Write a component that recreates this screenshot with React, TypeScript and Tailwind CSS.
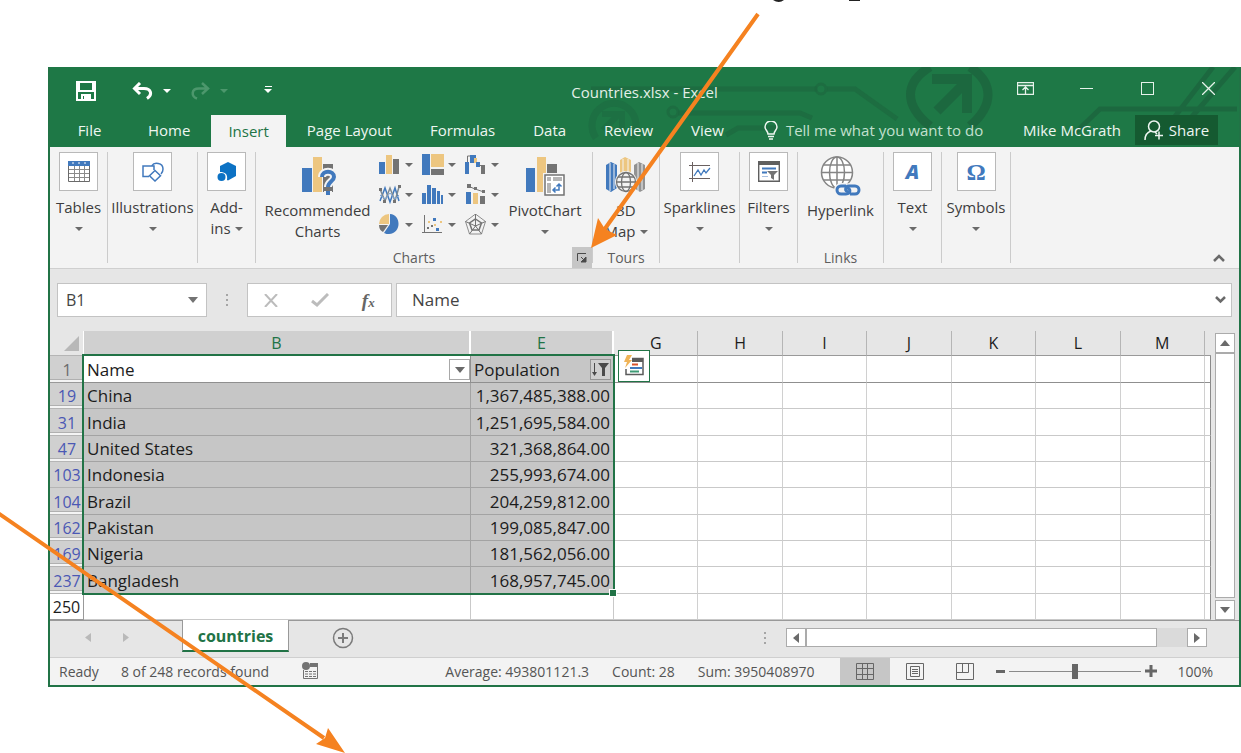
import React from 'react';
import clsx from 'clsx';

const ROWS = [
  { num: 19, name: 'China', population: '1,367,485,388.00', gap: true },
  { num: 31, name: 'India', population: '1,251,695,584.00', gap: true },
  { num: 47, name: 'United States', population: '321,368,864.00', gap: true },
  { num: 103, name: 'Indonesia', population: '255,993,674.00', gap: false },
  { num: 104, name: 'Brazil', population: '204,259,812.00', gap: true },
  { num: 162, name: 'Pakistan', population: '199,085,847.00', gap: true },
  { num: 169, name: 'Nigeria', population: '181,562,056.00', gap: true },
  { num: 237, name: 'Bangladesh', population: '168,957,745.00', gap: true },
];

const EMPTY_COLS = ['G', 'H', 'I', 'J', 'K', 'L', 'M'];
const TABS = ['Home', 'Insert', 'Page Layout', 'Formulas', 'Data', 'Review', 'View'];

const BLUE = '#4179bd';
const SAND = '#edc680';
const GRAY = '#737373';

function Caret({ className = 'text-[#6a6a6a]' }: { className?: string }) {
  return (
    <svg width="8" height="4" viewBox="0 0 8 4" className={clsx('shrink-0', className)} fill="currentColor">
      <path d="M0 0h8L4 4z" />
    </svg>
  );
}

/* Ribbon icons */

function TablesIcon() {
  return (
    <svg width="22" height="21" viewBox="0 0 22 21">
      <path d="M.5.5h21v20H.5z" fill="#fff" stroke="#6a6a6a" />
      <path d="M0 0h22v5H0z" fill={BLUE} />
      <path d="M4 2h2M10 2h2M16 2h2" stroke="#fff" />
      <path d="M1 8.5h20M1 12.5h20M1 16.5h20M6.5 5v15M11.5 5v15M16.5 5v15" stroke="#8a8a8a" />
    </svg>
  );
}

function ShapesIcon() {
  return (
    <svg width="22" height="20" viewBox="0 0 22 20" fill="none" stroke={BLUE} strokeWidth="1.5">
      <path d="M7 14.500H1V4h11v4M10 3.500C12 0 21 .5 21 7c0 2-1 4-2 5" />
      <path d="M13 8.500l5.500 5.200L13 19l-5.500-5.300z" fill="#fff" />
    </svg>
  );
}

function AddinsIcon() {
  return (
    <svg width="20" height="20" viewBox="0 0 20 20" fill="#0c72c4">
      <path d="M11 0l8 4v10l-8 4.500-1-.5c1-6-2-8-7-8V4z" />
      <circle cx="4.500" cy="15" r="4" />
    </svg>
  );
}

function RecommendedIcon() {
  return (
    <svg width="38" height="40" viewBox="0 0 38 40">
      <path d="M3 12h10v24H3z" fill={BLUE} />
      <path d="M14 1h9v35h-9z" fill={SAND} />
      <path d="M24 8h10v28H24z" fill={GRAY} />
      <path d="M23 21c0-7 12-7 12 0 0 4-6 5-6 10M29 35v4" fill="none" stroke="#f3f3f3" strokeWidth="8" />
      <path d="M23 21c0-7 12-7 12 0 0 4-6 5-6 10M29 35v4" fill="none" stroke={BLUE} strokeWidth="4" />
    </svg>
  );
}

function PivotChartIcon() {
  return (
    <svg width="42" height="40" viewBox="0 0 42 40">
      <path d="M2 12h9v24H2z" fill={BLUE} />
      <path d="M13 1h9v35h-9z" fill={SAND} />
      <path d="M23 8h10v12H23z" fill={GRAY} />
      <path d="M19 17h22v22H19z" fill="#f3f3f3" />
      <path d="M21 19h19v20H21z" fill="#fff" stroke={GRAY} strokeWidth="1.500" />
      <path d="M23 21h4v4h-4zM29 21h9v4h-9zM23 27h4v10h-4z" fill="#b5b5b5" />
      <path d="M29 34h6v-6M31.500 31.500L29 34l2.500 2.500M32.500 30.500L35 28l2.500 2.500" fill="none" stroke={BLUE} strokeWidth="1.500" />
    </svg>
  );
}

function MapIcon() {
  return (
    <svg width="40" height="40" viewBox="0 0 40 40">
      <path d="M0 9l5-3 6 3v23l-6 4-5-3z" fill={BLUE} />
      <path d="M14 4l5-3 6 3v28H14z" fill={SAND} />
      <path d="M28 9l5-3 6 3v24l-5 3-6-4z" fill="#929292" />
      <path d="M4 7v28M8 8v25M17 3v16M22 3v16M32 7v28M36 8v26" stroke="#f3f3f3" />
      <circle cx="20" cy="26" r="11" fill="#f3f3f3" />
      <g fill="none" stroke={GRAY} strokeWidth="1.300">
        <circle cx="20" cy="26" r="9.500" />
        <ellipse cx="20" cy="26" rx="4.500" ry="9.500" />
        <path d="M10.500 26h19M12 21h16M12 31h16" />
      </g>
    </svg>
  );
}

function SparklinesIcon() {
  return (
    <svg width="22" height="20" viewBox="0 0 22 20" fill="none">
      <path d="M0 3.500h21M3.500 0v20M0 16.500h21" stroke="#6a6060" />
      <path d="M5 14l4-6 3 5 3-5 2 3 4-5" stroke={BLUE} strokeWidth="1.300" />
    </svg>
  );
}

function FiltersIcon() {
  return (
    <svg width="22" height="21" viewBox="0 0 22 21">
      <path d="M.7.7h20.600v19.600H.7z" fill="#fff" stroke="#5f5f5f" strokeWidth="1.400" />
      <path d="M0 0h22v4H0z" fill="#5f5f5f" />
      <path d="M4 7.500h14M4 11.500h5" stroke={BLUE} strokeWidth="2" />
      <path d="M4 15.500h6" stroke="#a9c0e0" />
      <path d="M9 10h11l-4 4v5l-3-2v-3z" fill={GRAY} />
    </svg>
  );
}

function HyperlinkIcon() {
  return (
    <svg width="42" height="40" viewBox="0 0 42 40" fill="none">
      <g stroke="#858585" strokeWidth="1.500">
        <circle cx="17" cy="16.500" r="15.500" fill="#fff" />
        <ellipse cx="17" cy="16.500" rx="7.500" ry="15.500" />
        <path d="M17 1v31M1.500 16.500h31M4 9h26M4 24h26" />
      </g>
      <g stroke="#f3f3f3" strokeWidth="6">
        <rect x="17" y="30" width="13" height="8" rx="4" />
        <rect x="27" y="30" width="13" height="8" rx="4" />
      </g>
      <g stroke={BLUE} strokeWidth="3">
        <path d="M26 30h-5a4 4 0 000 8h5c5 0 5-6 1-6" />
        <path d="M30 38h5a4 4 0 000-8h-6c-4 0-5 6 0 6" />
      </g>
    </svg>
  );
}

/* Small chart gallery, three rows of three */
const CHART_ICONS: { label: string; art: React.ReactNode }[] = [
  {
    label: 'Column chart',
    art: (
      <>
        <path d="M0 8h6v12H0z" fill={BLUE} />
        <path d="M7 1h6v19H7z" fill={SAND} />
        <path d="M14 5h6v15h-6z" fill={GRAY} />
      </>
    ),
  },
  {
    label: 'Hierarchy chart',
    art: (
      <>
        <path d="M0 0h8v21H0z" fill={BLUE} />
        <path d="M9 0h13v13H9z" fill={SAND} />
        <path d="M9 15h13v6H9z" fill={GRAY} />
      </>
    ),
  },
  {
    label: 'Waterfall chart',
    art: (
      <>
        <path d="M0 8h4v12H0zM5 1h4v8H5z" fill={BLUE} />
        <path d="M5 1h6v3H5z" fill={BLUE} />
        <path d="M9 4h3v5H9z" fill={SAND} />
        <path d="M11 8h4v5h-4z" fill={BLUE} />
        <path d="M16 11h4v9h-4z" fill={GRAY} />
        <path d="M2.500 8V2H5M14 11.500h4" stroke={GRAY} fill="none" />
      </>
    ),
  },
  {
    label: 'Line chart',
    art: (
      <>
        <g fill="none" strokeWidth="1.500">
          <path d="M1 17l5-13 5 14 5-14 4 13" stroke={BLUE} />
          <path d="M1 5l5 12 5-13 5 13 4-14" stroke="#7c8a93" />
          <path d="M1 11l5 4 5-6 5 6 4-4" stroke="#7fa6d6" strokeWidth="1" />
        </g>
        <path d="M0 4h3v3H0zM19 1h3v3h-3zM4 16h3v3H4zM14 16h3v3h-3z" fill={GRAY} />
      </>
    ),
  },
  {
    label: 'Histogram',
    art: <path d="M0 9h4v11H0zM5 1h4v19H5zM10 4h4v16h-4zM15 7h3v13h-3zM19 11h2v9h-2z" fill={BLUE} />,
  },
  {
    label: 'Combo chart',
    art: (
      <>
        <path d="M1 8h5v12H1z" fill={BLUE} />
        <path d="M8 9h5v11H8z" fill={SAND} />
        <path d="M15 12h5v8h-5z" fill={GRAY} />
        <path d="M3 2l7 3 9 3" stroke={GRAY} fill="none" />
        <path d="M2 0h4v4H2zM9 3h3v3H9zM17 6h3v3h-3z" fill={GRAY} />
      </>
    ),
  },
  {
    label: 'Pie chart',
    art: (
      <>
        <path d="M10 10V0A10 10 0 000 10z" fill={SAND} />
        <path d="M9 11H0c0 4 2 6 4 7z" fill={GRAY} />
        <path d="M11 10V0c12 1 11 20-1 20-2 0-3 0-5-1z" fill={BLUE} />
      </>
    ),
  },
  {
    label: 'Scatter chart',
    art: (
      <>
        <path d="M2.500 1v18M0 18.500h20" stroke={GRAY} fill="none" />
        <path d="M11 4h3v3h-3zM14 14h3v3h-3z" fill={BLUE} />
        <path d="M6 7h2v2H6zM12 10h2v2h-2zM18 7h2v2h-2z" fill={SAND} />
        <path d="M5 13h2v2H5zM9 11h2v2H9z" fill={GRAY} />
      </>
    ),
  },
  {
    label: 'Radar chart',
    art: (
      <g fill="none" stroke={GRAY}>
        <path d="M10.500 0l10 7.500-4 12.500h-12L.5 7.500z" strokeWidth=".8" />
        <path d="M10.500 5l6 4-2.500 7H7L4.500 9z" strokeWidth="1.500" />
        <path d="M10.500 0v12M.5 7.500l10 4.500 10-4.500M4.500 20l6-8 6 8" />
      </g>
    ),
  },
];

function ChartGallery() {
  return (
    <div className="grid grid-cols-3 content-start gap-x-[9px] gap-y-[9px] pt-[7px]">
      {CHART_ICONS.map(({ label, art }) => (
        <button key={label} aria-label={label} className="flex items-center gap-1">
          <svg width="22" height="21" viewBox="0 0 22 21">{art}</svg>
          <Caret />
        </button>
      ))}
    </div>
  );
}

function Divider() {
  return <div className="my-[5px] w-px shrink-0 bg-[#cbcbcb]" />;
}

function BoxedGroup({ label, width, children }: { label: string; width: string; children: React.ReactNode }) {
  return (
    <button className={clsx('flex shrink-0 flex-col items-center pt-[5px]', width)}>
      <span className="mb-[6px] flex h-[39px] w-[39px] items-center justify-center border border-[#b9b9b9] bg-white">{children}</span>
      <span className="leading-[21px]">{label}</span>
      <span className="flex h-[21px] items-center"><Caret /></span>
    </button>
  );
}

function Ribbon() {
  return (
    <div className="flex h-[121px] whitespace-nowrap bg-[#f3f3f3] text-[15px] text-[#3d3d3d]">
      <BoxedGroup label="Tables" width="w-[57px]"><TablesIcon /></BoxedGroup>
      <Divider />
      <BoxedGroup label="Illustrations" width="w-[89px]"><ShapesIcon /></BoxedGroup>
      <Divider />
      <button className="flex w-[57px] shrink-0 flex-col items-center pt-[5px] leading-[21px]">
        <span className="mb-[6px] flex h-[39px] w-[39px] items-center justify-center border border-[#b9b9b9] bg-white"><AddinsIcon /></span>
        <span>Add-</span>
        <span className="flex items-center gap-1">ins <Caret /></span>
      </button>
      <Divider />

      <div className="flex w-[336px] shrink-0 flex-col">
        <div className="flex h-[100px] pl-2">
          <button className="mr-2 flex w-[107px] flex-col items-center pt-[9px] leading-[21px]">
            <span className="mb-1"><RecommendedIcon /></span>
            <span>Recommended</span>
            <span>Charts</span>
          </button>
          <ChartGallery />
          <button className="ml-2 flex w-[76px] flex-col items-center pt-[9px] leading-[21px]">
            <span className="mb-1"><PivotChartIcon /></span>
            <span>PivotChart</span>
            <span className="flex h-[21px] items-center"><Caret /></span>
          </button>
        </div>
        <div className="flex h-[21px] items-center">
          <span className="flex-1 text-center text-[14px] text-[#5e5e5e]">Charts</span>
          <button aria-label="Charts dialog launcher" className="flex h-[21px] w-5 items-center justify-center bg-[#c6c6c6]">
            <svg width="10" height="10" viewBox="0 0 10 10" fill="none" stroke="#4a4a4a">
              <path d="M.5 8V.5H9M4 4l4 4" />
              <path d="M9 4v5H4z" fill="#4a4a4a" />
            </svg>
          </button>
        </div>
      </div>
      <Divider />

      <div className="flex w-[66px] shrink-0 flex-col items-center">
        <button className="flex h-[100px] flex-col items-center pt-[9px] leading-[21px]">
          <span className="mb-1"><MapIcon /></span>
          <span>3D</span>
          <span className="flex items-center gap-1">Map <Caret /></span>
        </button>
        <span className="text-[14px] leading-[21px] text-[#5e5e5e]">Tours</span>
      </div>
      <Divider />
      <BoxedGroup label="Sparklines" width="w-[79px]"><SparklinesIcon /></BoxedGroup>
      <Divider />
      <BoxedGroup label="Filters" width="w-[57px]"><FiltersIcon /></BoxedGroup>
      <Divider />
      <div className="flex w-[85px] shrink-0 flex-col items-center">
        <button className="flex h-[100px] flex-col items-center pt-[9px] leading-[21px]">
          <span className="mb-1"><HyperlinkIcon /></span>
          <span>Hyperlink</span>
        </button>
        <span className="text-[14px] leading-[21px] text-[#5e5e5e]">Links</span>
      </div>
      <Divider />
      <BoxedGroup label="Text" width="w-[57px]">
        <span className="text-[20px] font-extrabold italic leading-none text-[#4179bd]">A</span>
      </BoxedGroup>
      <Divider />
      <BoxedGroup label="Symbols" width="w-[68px]">
        <span className="font-['Liberation_Serif',serif] text-[24px] font-bold leading-none text-[#4179bd]">Ω</span>
      </BoxedGroup>
      <Divider />
      <button aria-label="Collapse the ribbon" className="mb-[6px] ml-auto mr-[14px] self-end">
        <svg width="12" height="8" viewBox="0 0 12 8" fill="none" stroke="#6a6a6a" strokeWidth="2.500"><path d="M1 7l5-5 5 5" /></svg>
      </button>
    </div>
  );
}

/* Circuit pattern behind the title bar */
function Circuit() {
  return (
    <svg className="pointer-events-none absolute right-0 top-0" width="681" height="80" viewBox="560 67 681 80" fill="none" stroke="#1c683f" strokeWidth="4">
      <path d="M593 89h226M829 89h28l42 30M680 113h122l12 5M728 135l12-7h40" strokeWidth="5" opacity=".7" />
      <circle cx="823" cy="89" r="5" strokeWidth="3" opacity=".7" />
      <circle cx="675" cy="112" r="5" strokeWidth="3" opacity=".7" />
      <path d="M598 138a22 22 0 1136 0" strokeWidth="7" opacity=".5" />
      <path d="M605 130l16-16M604 114h20v18" strokeWidth="6" opacity=".5" />
      <path d="M932 67c-26 16-26 38 0 59M972 67c24 16 24 38 0 59" strokeWidth="9" />
      <path d="M939 111l28-28M934 79h35v34" strokeWidth="10" />
      <path d="M1076 134l26-25h137M1175 119l40-52M1192 119l45-52" strokeWidth="5" />
    </svg>
  );
}

function TitleBar() {
  return (
    <header className="relative whitespace-nowrap bg-[#1e7846] text-[15px] text-white">
      <Circuit />
      <div className="relative grid h-[47px] grid-cols-[1fr_auto_1fr] items-center">
        <div className="flex items-center pl-[26px]">
          <button aria-label="Save">
            <svg width="20" height="20" viewBox="0 0 20 20" fill="currentColor">
              <path fillRule="evenodd" d="M0 0h20v20H0zM4 2v7h12V2zM2 11v7h3v-5h10v5h3v-7zM7 15v3h1v-3z" />
            </svg>
          </button>
          <button aria-label="Undo" className="ml-9 flex items-center gap-[9px]">
            <svg width="22" height="18" viewBox="0 0 22 18" fill="none" stroke="currentColor" strokeWidth="3">
              <path d="M8 1L2.500 6.500 8 12M3 6.500h9c7 0 9 6 3 10" />
            </svg>
            <Caret className="text-white" />
          </button>
          <button aria-label="Redo" className="ml-[18px] flex items-center gap-[9px] text-[#4c976c]">
            <svg width="22" height="18" viewBox="0 0 22 18" fill="none" stroke="currentColor" strokeWidth="2.500">
              <path d="M13 1l6 5.500-6 5.500M19 6.500h-9c-8 0-8 8-2 10" />
            </svg>
            <Caret className="text-[#4c976c]" />
          </button>
          <button aria-label="Customize Quick Access Toolbar" className="ml-9 flex -translate-y-px flex-col items-center gap-[2px]">
            <span className="h-px w-[7px] bg-white" />
            <Caret className="text-white" />
          </button>
        </div>
        <h1 className="pt-1 text-[15px] text-[#e4efe8]">Countries.xlsx - Excel</h1>
        <div className="flex justify-end pb-1 text-[#e6f2ea]">
          <button aria-label="Ribbon display options" className="flex w-[61px] items-center justify-center">
            <svg width="17" height="13" viewBox="0 0 17 13" fill="none" stroke="currentColor">
              <path d="M.5.5h16v12H.5zM1 3.500h15M8.500 12V5M5.500 8l3-3 3 3" strokeWidth="1.300" />
            </svg>
          </button>
          <button aria-label="Minimize" className="flex w-[61px] items-center justify-center"><span className="h-px w-[13px] bg-[#e6f2ea]" /></button>
          <button aria-label="Maximize" className="flex w-[61px] items-center justify-center"><span className="h-[13px] w-[13px] border border-[#e6f2ea]" /></button>
          <button aria-label="Close" className="flex w-[61px] items-center justify-center">
            <svg width="13" height="13" viewBox="0 0 13 13" fill="none" stroke="currentColor" strokeWidth="1.300"><path d="M0 0l13 13M13 0L0 13" /></svg>
          </button>
        </div>
      </div>

      <nav className="relative flex h-[33px] items-stretch text-[#eef6f1]">
        <button className="w-[79px]">File</button>
        {TABS.map((tab) => (
          <button key={tab} className={clsx('mx-[2px] px-[17px]', tab === 'Insert' && 'mt-px bg-[#f3f3f3] text-[#217346]')}>
            {tab}
          </button>
        ))}
        <button className="ml-[21px] flex items-center gap-2 text-[#c3e0cf]">
          <svg width="14" height="19" viewBox="0 0 14 19" fill="none" stroke="#eef6f1" strokeWidth="1.500">
            <path d="M4 13c0-3-3-4-3-7a6 6 0 0112 0c0 3-3 4-3 7zM4 15.500h6M5 18h4" />
          </svg>
          Tell me what you want to do
        </button>
        <button className="ml-auto">Mike McGrath</button>
        <button className="mb-[2px] ml-[14px] mr-[21px] mt-px flex w-[83px] items-center justify-center gap-[5px] bg-[#155a31]">
          <svg width="20" height="21" viewBox="0 0 20 21" fill="none" stroke="currentColor" strokeWidth="1.500">
            <circle cx="10" cy="6.500" r="5.500" />
            <path d="M1 20c0-5 3-8 6-9M11 12l2 2M15 11.500v8M11 15.500h8" />
          </svg>
          Share
        </button>
      </nav>
    </header>
  );
}

function FormulaBar() {
  return (
    <div className="flex items-center border-t border-[#cfcfcf] px-[7px] py-[14px] text-[#444]">
      <div className="flex h-[34px] w-[150px] items-center border border-[#c3c3c3] bg-white pr-2">
        <input aria-label="Name box" defaultValue="B1" className="w-full min-w-0 pl-2 text-[16px] outline-none" />
        <button aria-label="Open name list"><svg width="10" height="6" viewBox="0 0 10 6" fill="#737373"><path d="M0 0h10L5 6z" /></svg></button>
      </div>
      <div className="flex w-10 flex-col items-center gap-[3px]">
        <span className="h-[2px] w-[2px] bg-[#a5a5a5]" />
        <span className="h-[2px] w-[2px] bg-[#a5a5a5]" />
        <span className="h-[2px] w-[2px] bg-[#a5a5a5]" />
      </div>
      <div className="flex h-[34px] w-[145px] items-center justify-around border border-[#c3c3c3] bg-white">
        <button aria-label="Cancel">
          <svg width="14" height="13" viewBox="0 0 14 13" fill="none" stroke="#bcbcbc" strokeWidth="2"><path d="M1 0l12 13M13 0L1 13" /></svg>
        </button>
        <button aria-label="Enter">
          <svg width="18" height="14" viewBox="0 0 18 14" fill="none" stroke="#bcbcbc" strokeWidth="3"><path d="M1 8l5 4L17 1" /></svg>
        </button>
        <button aria-label="Insert function" className="font-['Liberation_Serif',serif] text-[19px] font-bold italic leading-none text-[#666]">
          f<span className="text-[13px]">x</span>
        </button>
      </div>
      <div className="ml-1 flex h-[34px] flex-1 items-center border border-[#c3c3c3] bg-white pr-[5px]">
        <input aria-label="Formula" defaultValue="Name" className="w-full min-w-0 pl-[15px] text-[17px] outline-none" />
        <button aria-label="Expand formula bar">
          <svg width="11" height="8" viewBox="0 0 11 8" fill="none" stroke="#6a6a6a" strokeWidth="2.500"><path d="M1 1l4.500 4.500L10 1" /></svg>
        </button>
      </div>
    </div>
  );
}

const cell = 'border-b border-r border-[#c9c9c9]';
const selected = 'border-b border-r border-[#a3a3a3] bg-[#c6c6c6]';
const hiddenBelow = 'shadow-[inset_0_-2px_0_#f4f4f4,inset_0_-3px_0_#b0b0b0]';

function EmptyCells({ line = 'border-b-[#c9c9c9]' }: { line?: string }) {
  return (
    <>
      {EMPTY_COLS.map((c) => <td key={c} className={clsx('border-b border-r border-r-[#d0d0d0]', line)} />)}
      <td className={clsx('border-b border-r border-r-[#8a8a8a]', line)} />
    </>
  );
}

function Sheet() {
  return (
    <div className="flex">
      <div className="relative min-w-0 flex-1">
        <table className="w-full table-fixed border-separate border-spacing-0 bg-white text-[17px] leading-[24px] text-[#1c1c1c]">
          <colgroup>
            <col className="w-[34px]" />
            <col className="w-[387px]" />
            <col className="w-[143px]" />
            {EMPTY_COLS.map((c) => <col key={c} />)}
            <col className="w-[6px]" />
          </colgroup>
          <thead>
            <tr className="h-[25px] bg-[#e6e6e6]">
              <th className="border-b border-r border-[#b5b5b5] border-r-white p-0">
                <svg width="15" height="15" viewBox="0 0 15 15" fill="#b8b8b8" className="ml-[14px]"><path d="M15 0v15H0z" /></svg>
              </th>
              <th className="border-b border-r-2 border-[#999] border-r-white bg-[#d0d0d0] p-0 text-[16px] font-normal text-[#217346]">B</th>
              <th className="border-b border-r-2 border-[#999] border-r-white bg-[#d0d0d0] p-0 text-[16px] font-normal text-[#217346]">E</th>
              {EMPTY_COLS.map((c) => (
                <th key={c} className="border-b border-r border-[#999] border-r-[#b5b5b5] p-0 text-[16px] font-normal">{c}</th>
              ))}
              <th className="border-b border-[#999] p-0" />
            </tr>
          </thead>
          <tbody>
            <tr className="h-[27px]">
              <th className={clsx('border-b border-[#999] bg-[#d0d0d0] p-0 pt-px text-[16px] font-normal text-[#6b6b6b]', hiddenBelow)}>1</th>
              <td className="border-b border-r border-[#8f8f8f] p-0 pl-[3px] pt-px">
                <div className="flex items-center justify-between">
                  <span>Name</span>
                  <button aria-label="Filter Name" className="flex h-[21px] w-[21px] items-center justify-center border border-[#a8a8a8] bg-white"><svg width="10" height="6" viewBox="0 0 10 6" fill="#6a6a6a"><path d="M0 0h10L5 6z" /></svg></button>
                </div>
              </td>
              <td className="border-b border-r border-[#8f8f8f] bg-[#c6c6c6] p-0 pl-[3px] pt-px">
                <div className="flex items-center justify-between pr-[2px]">
                  <span>Population</span>
                  <button aria-label="Filter Population" className="flex h-[21px] w-[21px] items-center justify-center border border-[#959595] bg-[#cfcfcf]">
                    <svg width="17" height="13" viewBox="0 0 17 13" fill="#4a4a4a">
                      <path d="M2 0h1v9h2l-2.500 4L0 9h2zM6 0h11l-4 5v8h-3V5z" />
                    </svg>
                  </button>
                </div>
              </td>
              <EmptyCells line="border-b-[#8f8f8f]" />
            </tr>
            {ROWS.map((row, i) => (
              <tr key={row.num} className={i % 3 === 1 ? 'h-[27px]' : 'h-[26px]'}>
                <th className={clsx('border-b border-[#b5b5b5] bg-[#d0d0d0] p-0 pt-px text-[16px] font-normal text-[#4b58b4]', row.gap && hiddenBelow)}>{row.num}</th>
                <td className={clsx(selected, 'p-0 pl-[3px] pt-px')}>{row.name}</td>
                <td className={clsx(selected, 'p-0 pr-[3px] pt-px text-right')}>{row.population}</td>
                <EmptyCells />
              </tr>
            ))}
            <tr className="h-[26px]">
              <th className="border-b border-r border-[#999] p-0 pt-px text-[16px] font-normal">250</th>
              <td className={cell} />
              <td className={cell} />
              <EmptyCells />
            </tr>
          </tbody>
        </table>

        {/* selection outline with fill handle */}
        <div className="pointer-events-none absolute left-[32px] top-[23px] h-[241px] w-[533px] border-2 border-[#217346]">
          <span className="absolute -bottom-1 -right-1 h-[8px] w-[8px] border border-white bg-[#217346]" />
        </div>
        <button aria-label="Quick analysis" className="absolute left-[568px] top-[19px] flex h-8 w-8 items-center justify-center border border-[#217346] bg-white">
          <svg width="22" height="22" viewBox="0 0 22 22" fill="none">
            <path d="M9 3.500h11v16H3V14" stroke="#5b5b5b" strokeWidth="1.500" />
            <path d="M9 3h11v4H9z" fill="#5b5b5b" />
            <path d="M4 0h5L6 5h3l-7 8 2-6H1z" fill="#f0b458" />
            <path d="M9 9.500h6" stroke="#d9532c" strokeWidth="2" />
            <path d="M7 13h12" stroke={BLUE} strokeWidth="2" />
            <path d="M7 16.500h9" stroke="#3d9a75" strokeWidth="2" />
          </svg>
        </button>
      </div>

      <div className="flex w-[28px] shrink-0 flex-col px-1 pt-[2px]">
        <button aria-label="Scroll up" className="flex h-5 items-center justify-center border border-[#ababab] bg-white">
          <svg width="10" height="6" viewBox="0 0 10 6" fill="#6a6a6a"><path d="M0 6h10L5 0z" /></svg>
        </button>
        <div className="mb-[2px] flex-1 border border-[#ababab] bg-white" />
        <button aria-label="Scroll down" className="flex h-5 items-center justify-center border border-[#ababab] bg-white">
          <svg width="10" height="6" viewBox="0 0 10 6" fill="#6a6a6a"><path d="M0 0h10L5 6z" /></svg>
        </button>
      </div>
    </div>
  );
}

function SheetTabs() {
  return (
    <div className="flex h-[37px]">
      <div className="flex w-[132px] items-center border-t border-[#999] pb-[3px] pl-[35px]">
        <button aria-label="Previous sheet"><svg width="6" height="9" viewBox="0 0 6 9" fill="#b9b9b9"><path d="M6 0v9L0 4.500z" /></svg></button>
        <button aria-label="Next sheet" className="ml-8"><svg width="6" height="9" viewBox="0 0 6 9" fill="#b9b9b9"><path d="M0 0v9l6-4.500z" /></svg></button>
      </div>
      <button className="h-[32px] w-[107px] border-x border-b-2 border-x-[#999] border-b-[#217346] bg-white pt-[2px] text-[16px] font-bold text-[#217346]">countries</button>
      <div className="flex flex-1 items-center border-t border-[#999] pb-[3px] pl-[43px]">
        <button aria-label="New sheet">
          <svg width="22" height="22" viewBox="0 0 22 22" fill="none" stroke="#7a7a7a">
            <circle cx="11" cy="11" r="9.500" strokeWidth="1.500" />
            <path d="M6 11h10M11 6v10" strokeWidth="2" />
          </svg>
        </button>
        <div className="ml-auto mr-5 flex flex-col gap-[3px]">
          <span className="h-[2px] w-[2px] bg-[#a5a5a5]" />
          <span className="h-[2px] w-[2px] bg-[#a5a5a5]" />
          <span className="h-[2px] w-[2px] bg-[#a5a5a5]" />
        </div>
        <div className="flex h-[19px] w-[421px] bg-[#dadada]">
          <button aria-label="Scroll left" className="flex w-5 items-center justify-center border border-[#ababab] bg-white"><svg width="6" height="10" viewBox="0 0 6 10" fill="#6a6a6a"><path d="M6 0v10L0 5z" /></svg></button>
          <div className="w-[351px] border border-[#ababab] bg-white" />
          <button aria-label="Scroll right" className="ml-auto flex w-5 items-center justify-center border border-[#ababab] bg-white"><svg width="6" height="10" viewBox="0 0 6 10" fill="#6a6a6a"><path d="M0 0v10l6-5z" /></svg></button>
        </div>
        <div className="w-8" />
      </div>
    </div>
  );
}

function StatusBar() {
  return (
    <footer className="flex h-[28px] items-stretch whitespace-nowrap border-t border-[#cfcfcf] bg-[#f3f3f3] pl-[9px] text-[14px] text-[#555]">
      <div className="flex items-center pb-px">
        <span>Ready</span>
        <span className="ml-[22px]">8 of 248 records found</span>
        <button aria-label="Record macro" className="ml-[33px]">
          <svg width="17" height="18" viewBox="0 0 17 18" fill="none">
            <path d="M1.500 8v8.500h14v-15H9" stroke="#737373" />
            <path d="M8 1h8v4H8z" fill="#737373" />
            <circle cx="4" cy="4" r="4" fill="#737373" />
            <path d="M3 9.500h11M3 12h11M3 14.500h11" stroke="#737373" strokeDasharray="3 1" />
          </svg>
        </button>
      </div>
      <div className="ml-auto flex items-center gap-[23px] pb-px pr-[26px]">
        <span>Average: 493801121.3</span>
        <span>Count: 28</span>
        <span>Sum: 3950408970</span>
      </div>
      <button aria-label="Normal view" className="flex w-[50px] items-center justify-center bg-[#c6c6c6] pb-px">
        <svg width="18" height="17" viewBox="0 0 18 17" fill="none" stroke="#666"><path d="M.5.5h17v16H.5zM6.500 0v17M11.500 0v17M0 5.500h18M0 11.500h18" /></svg>
      </button>
      <button aria-label="Page layout view" className="flex w-[50px] items-center justify-center pb-px">
        <svg width="18" height="17" viewBox="0 0 18 17" fill="none" stroke="#666"><path d="M.5.5h17v16H.5zM4.500 3.500h9v10h-9zM6 6.500h6M6 8.500h6M6 10.500h6" /></svg>
      </button>
      <button aria-label="Page break preview" className="flex w-[50px] items-center justify-center pb-px">
        <svg width="18" height="17" viewBox="0 0 18 17" fill="none" stroke="#666"><path d="M.5.5h17v16H.5zM.5 9.500h12v-9M6.500 0v9" /></svg>
      </button>
      <div className="flex items-center pb-px pl-[6px] pr-[26px]">
        <button aria-label="Zoom out" className="flex h-4 w-[9px] items-center"><span className="h-[3px] w-full bg-[#666]" /></button>
        <input
          type="range"
          aria-label="Zoom"
          defaultValue="50"
          className="mx-[4px] h-4 w-[132px] appearance-none bg-transparent [&::-webkit-slider-runnable-track]:h-px [&::-webkit-slider-runnable-track]:bg-[#8a8a8a] [&::-webkit-slider-thumb]:-mt-[7px] [&::-webkit-slider-thumb]:h-[15px] [&::-webkit-slider-thumb]:w-[6px] [&::-webkit-slider-thumb]:appearance-none [&::-webkit-slider-thumb]:bg-[#666]"
        />
        <button aria-label="Zoom in">
          <svg width="12" height="12" viewBox="0 0 12 12" stroke="#666" strokeWidth="3"><path d="M0 6h12M6 0v12" /></svg>
        </button>
        <span className="ml-5">100%</span>
      </div>
    </footer>
  );
}

/* Callout arrows drawn across the window */
function Callouts() {
  return (
    <svg className="pointer-events-none absolute left-0 top-0" width="900" height="753" viewBox="0 0 900 753">
      <g stroke="#f58220" strokeWidth="4" fill="none">
        <path d="M758 14L604 230M-2 513l326 225" />
      </g>
      <g fill="#f58220">
        <path d="M591 248l7-30 7 11 12 6z" />
        <path d="M345 753l-17-25-3 10-9 6z" />
      </g>
      <path d="M773 0h11q-5 4-11 0zM849 0h11v1h-11z" fill="#222" />
    </svg>
  );
}

export default function App() {
  return (
    <div className="relative min-h-screen overflow-hidden bg-white pl-12 pt-[67px] font-['Open_Sans','Noto_Sans',sans-serif]">
      <main className="border-2 border-t-0 border-[#217346] bg-[#e6e6e6]">
        <TitleBar />
        <Ribbon />
        <FormulaBar />
        <Sheet />
        <SheetTabs />
        <StatusBar />
      </main>
      <Callouts />
    </div>
  );
}
